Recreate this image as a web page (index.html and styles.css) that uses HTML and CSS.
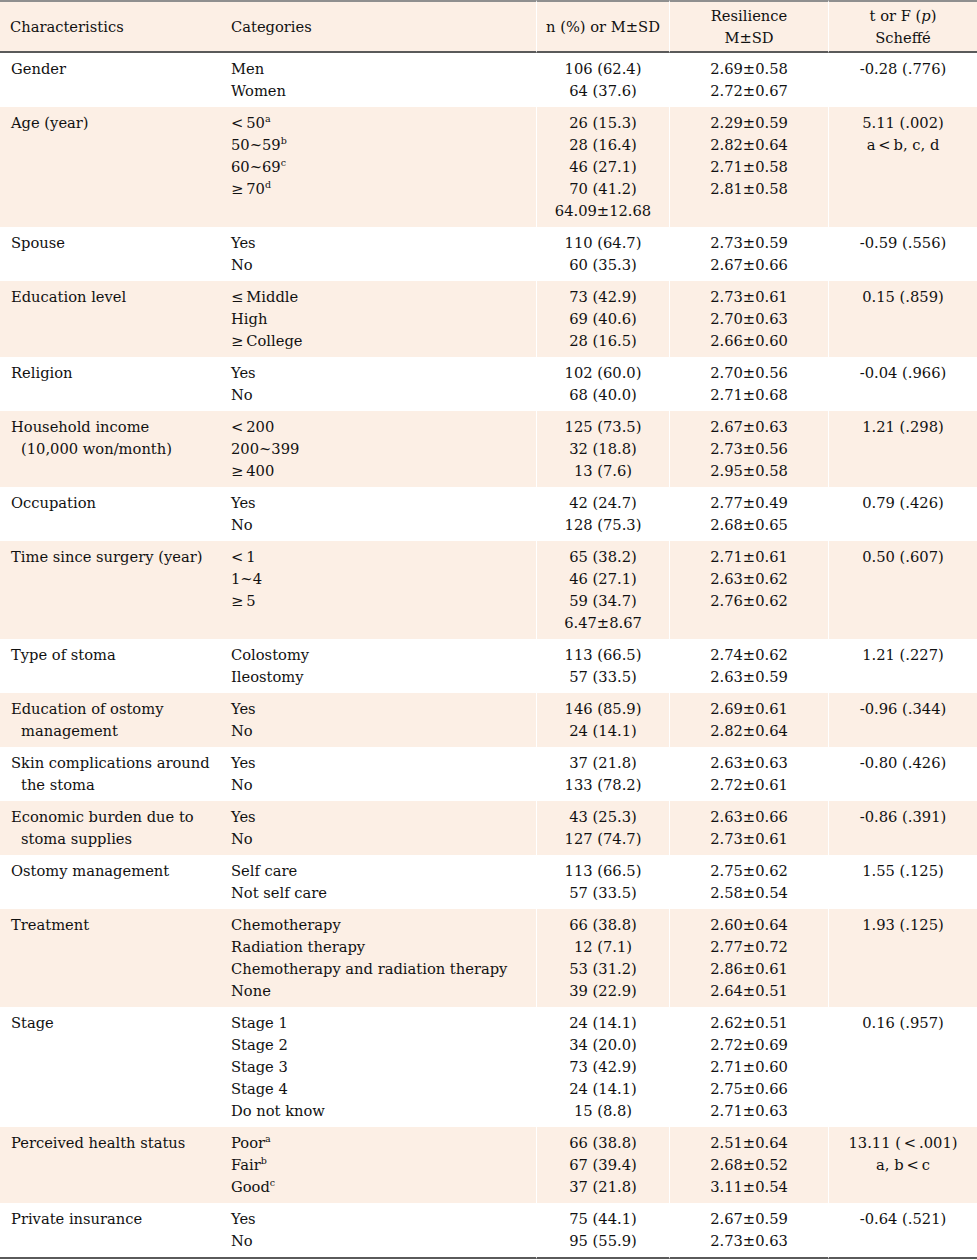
FILE: index.html
```html
<!DOCTYPE html>
<html lang="en">
<head>
<meta charset="utf-8">
<title>Resilience by characteristics</title>
<link rel="stylesheet" href="styles.css">
</head>
<body>
<table class="tbl">
  <colgroup>
    <col class="c1"><col class="c2"><col class="c3"><col class="c4"><col class="c5">
  </colgroup>
  <thead>
    <tr>
      <th class="left">Characteristics</th>
      <th class="left">Categories</th>
      <th>n (%) or M±SD</th>
      <th>Resilience<br>M±SD</th>
      <th>t or F (<i>p</i>)<br>Scheffé</th>
    </tr>
  </thead>
  <tbody>
    <tr>
      <td class="char">Gender</td>
      <td>Men<br>Women</td>
      <td class="num">106 (62.4)<br>64 (37.6)</td>
      <td class="num">2.69±0.58<br>2.72±0.67</td>
      <td class="num">-0.28 (.776)</td>
    </tr>
    <tr class="alt">
      <td class="char">Age (year)</td>
      <td>&lt;&thinsp;50<sup>a</sup><br>50~59<sup>b</sup><br>60~69<sup>c</sup><br>≥&thinsp;70<sup>d</sup></td>
      <td class="num">26 (15.3)<br>28 (16.4)<br>46 (27.1)<br>70 (41.2)<br>64.09±12.68</td>
      <td class="num">2.29±0.59<br>2.82±0.64<br>2.71±0.58<br>2.81±0.58</td>
      <td class="num">5.11 (.002)<br>a&thinsp;&lt;&thinsp;b, c, d</td>
    </tr>
    <tr>
      <td class="char">Spouse</td>
      <td>Yes<br>No</td>
      <td class="num">110 (64.7)<br>60 (35.3)</td>
      <td class="num">2.73±0.59<br>2.67±0.66</td>
      <td class="num">-0.59 (.556)</td>
    </tr>
    <tr class="alt">
      <td class="char">Education level</td>
      <td>≤&thinsp;Middle<br>High<br>≥&thinsp;College</td>
      <td class="num">73 (42.9)<br>69 (40.6)<br>28 (16.5)</td>
      <td class="num">2.73±0.61<br>2.70±0.63<br>2.66±0.60</td>
      <td class="num">0.15 (.859)</td>
    </tr>
    <tr>
      <td class="char">Religion</td>
      <td>Yes<br>No</td>
      <td class="num">102 (60.0)<br>68 (40.0)</td>
      <td class="num">2.70±0.56<br>2.71±0.68</td>
      <td class="num">-0.04 (.966)</td>
    </tr>
    <tr class="alt">
      <td class="char">Household income<br>(10,000 won/month)</td>
      <td>&lt;&thinsp;200<br>200~399<br>≥&thinsp;400</td>
      <td class="num">125 (73.5)<br>32 (18.8)<br>13 (7.6)</td>
      <td class="num">2.67±0.63<br>2.73±0.56<br>2.95±0.58</td>
      <td class="num">1.21 (.298)</td>
    </tr>
    <tr>
      <td class="char">Occupation</td>
      <td>Yes<br>No</td>
      <td class="num">42 (24.7)<br>128 (75.3)</td>
      <td class="num">2.77±0.49<br>2.68±0.65</td>
      <td class="num">0.79 (.426)</td>
    </tr>
    <tr class="alt">
      <td class="char">Time since surgery (year)</td>
      <td>&lt;&thinsp;1<br>1~4<br>≥&thinsp;5</td>
      <td class="num">65 (38.2)<br>46 (27.1)<br>59 (34.7)<br>6.47±8.67</td>
      <td class="num">2.71±0.61<br>2.63±0.62<br>2.76±0.62</td>
      <td class="num">0.50 (.607)</td>
    </tr>
    <tr>
      <td class="char">Type of stoma</td>
      <td>Colostomy<br>Ileostomy</td>
      <td class="num">113 (66.5)<br>57 (33.5)</td>
      <td class="num">2.74±0.62<br>2.63±0.59</td>
      <td class="num">1.21 (.227)</td>
    </tr>
    <tr class="alt">
      <td class="char">Education of ostomy<br>management</td>
      <td>Yes<br>No</td>
      <td class="num">146 (85.9)<br>24 (14.1)</td>
      <td class="num">2.69±0.61<br>2.82±0.64</td>
      <td class="num">-0.96 (.344)</td>
    </tr>
    <tr>
      <td class="char">Skin complications around<br>the stoma</td>
      <td>Yes<br>No</td>
      <td class="num">37 (21.8)<br>133 (78.2)</td>
      <td class="num">2.63±0.63<br>2.72±0.61</td>
      <td class="num">-0.80 (.426)</td>
    </tr>
    <tr class="alt">
      <td class="char">Economic burden due to<br>stoma supplies</td>
      <td>Yes<br>No</td>
      <td class="num">43 (25.3)<br>127 (74.7)</td>
      <td class="num">2.63±0.66<br>2.73±0.61</td>
      <td class="num">-0.86 (.391)</td>
    </tr>
    <tr>
      <td class="char">Ostomy management</td>
      <td>Self care<br>Not self care</td>
      <td class="num">113 (66.5)<br>57 (33.5)</td>
      <td class="num">2.75±0.62<br>2.58±0.54</td>
      <td class="num">1.55 (.125)</td>
    </tr>
    <tr class="alt">
      <td class="char">Treatment</td>
      <td>Chemotherapy<br>Radiation therapy<br>Chemotherapy and radiation therapy<br>None</td>
      <td class="num">66 (38.8)<br>12 (7.1)<br>53 (31.2)<br>39 (22.9)</td>
      <td class="num">2.60±0.64<br>2.77±0.72<br>2.86±0.61<br>2.64±0.51</td>
      <td class="num">1.93 (.125)</td>
    </tr>
    <tr>
      <td class="char">Stage</td>
      <td>Stage 1<br>Stage 2<br>Stage 3<br>Stage 4<br>Do not know</td>
      <td class="num">24 (14.1)<br>34 (20.0)<br>73 (42.9)<br>24 (14.1)<br>15 (8.8)</td>
      <td class="num">2.62±0.51<br>2.72±0.69<br>2.71±0.60<br>2.75±0.66<br>2.71±0.63</td>
      <td class="num">0.16 (.957)</td>
    </tr>
    <tr class="alt">
      <td class="char">Perceived health status</td>
      <td>Poor<sup>a</sup><br>Fair<sup>b</sup><br>Good<sup>c</sup></td>
      <td class="num">66 (38.8)<br>67 (39.4)<br>37 (21.8)</td>
      <td class="num">2.51±0.64<br>2.68±0.52<br>3.11±0.54</td>
      <td class="num">13.11 (&thinsp;&lt;&thinsp;.001)<br>a, b&thinsp;&lt;&thinsp;c</td>
    </tr>
    <tr class="last">
      <td class="char">Private insurance</td>
      <td>Yes<br>No</td>
      <td class="num">75 (44.1)<br>95 (55.9)</td>
      <td class="num">2.67±0.59<br>2.73±0.63</td>
      <td class="num">-0.64 (.521)</td>
    </tr>
  </tbody>
</table>
</body>
</html>
```

FILE: styles.css
```css
html, body {
  margin: 0;
  padding: 0;
  background: #ffffff;
}

.tbl {
  width: 977px;
  border-collapse: separate;
  border-spacing: 0;
  table-layout: fixed;
  font-family: "DejaVu Serif", "Liberation Serif", serif;
  font-size: 14.7px;
  line-height: 22px;
  color: #111111;
}

.c1 { width: 221px; }
.c2 { width: 315px; }
.c3 { width: 133px; }
.c4 { width: 159px; }
.c5 { width: 149px; }

.tbl th {
  font-weight: normal;
  text-align: center;
  vertical-align: middle;
  background: #fcefe5;
  padding: 3px 0 2px;
  border-top: 2px solid #8f8f8f;
  border-bottom: 2px solid #5a5a5a;
}

.tbl th.left {
  text-align: left;
  padding-left: 10px;
}

.tbl th + th + th,
.tbl td + td + td {
  border-left: 1px solid #ffffff;
}

.tbl td {
  vertical-align: top;
  padding: 5px 0 5px 10px;
  white-space: nowrap;
}

.tbl td.num {
  text-align: center;
  padding-left: 0;
}

.tbl td.char {
  padding-left: 21px;
  text-indent: -10px;
}

.tbl tr.alt td {
  background: #fcefe5;
}

.tbl tr.last td {
  border-bottom: 2px solid #5a5a5a;
}

.tbl sup {
  font-size: 9.5px;
  line-height: 0;
  vertical-align: 6px;
}
```
